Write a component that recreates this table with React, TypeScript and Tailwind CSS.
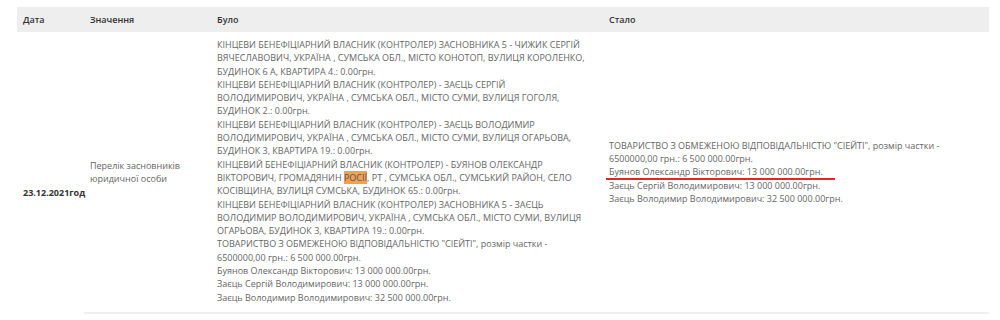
import React from "react";

const buloLines: React.ReactNode[] = [
  "КІНЦЕВИ БЕНЕФІЦІАРНИЙ ВЛАСНИК (КОНТРОЛЕР) ЗАСНОВНИКА 5 - ЧИЖИК СЕРГІЙ",
  "ВЯЧЕСЛАВОВИЧ, УКРАЇНА , СУМСЬКА ОБЛ., МІСТО КОНОТОП, ВУЛИЦЯ КОРОЛЕНКО,",
  "БУДИНОК 6 А, КВАРТИРА 4.: 0.00грн.",
  "КІНЦЕВИ БЕНЕФІЦІАРНИЙ ВЛАСНИК (КОНТРОЛЕР) - ЗАЄЦЬ СЕРГІЙ",
  "ВОЛОДИМИРОВИЧ, УКРАЇНА , СУМСЬКА ОБЛ., МІСТО СУМИ, ВУЛИЦЯ ГОГОЛЯ,",
  "БУДИНОК 2.: 0.00грн.",
  "КІНЦЕВИ БЕНЕФІЦІАРНИЙ ВЛАСНИК (КОНТРОЛЕР) - ЗАЄЦЬ ВОЛОДИМИР",
  "ВОЛОДИМИРОВИЧ, УКРАЇНА , СУМСЬКА ОБЛ., МІСТО СУМИ, ВУЛИЦЯ ОГАРЬОВА,",
  "БУДИНОК 3, КВАРТИРА 19.: 0.00грн.",
  "КІНЦЕВИЙ БЕНЕФІЦІАРНИЙ ВЛАСНИК (КОНТРОЛЕР) - БУЯНОВ ОЛЕКСАНДР",
  <>
    ВІКТОРОВИЧ, ГРОМАДЯНИН <span className="bg-[#f6a04d] text-[#555]">РОСІЇ</span>, РТ , СУМСЬКА ОБЛ., СУМСЬКИЙ РАЙОН, СЕЛО
  </>,
  "КОСІВЩИНА, ВУЛИЦЯ СУМСЬКА, БУДИНОК 65.: 0.00грн.",
  "КІНЦЕВИ БЕНЕФІЦІАРНИЙ ВЛАСНИК (КОНТРОЛЕР) ЗАСНОВНИКА 5 - ЗАЄЦЬ",
  "ВОЛОДИМИР ВОЛОДИМИРОВИЧ, УКРАЇНА , СУМСЬКА ОБЛ., МІСТО СУМИ, ВУЛИЦЯ",
  "ОГАРЬОВА, БУДИНОК 3, КВАРТИРА 19.: 0.00грн.",
  "ТОВАРИСТВО З ОБМЕЖЕНОЮ ВІДПОВІДАЛЬНІСТЮ \"СІЕЙТІ\", розмір частки -",
  "6500000,00 грн.: 6 500 000.00грн.",
  "Буянов Олександр Вікторович: 13 000 000.00грн.",
  "Заєць Сергій Володимирович: 13 000 000.00грн.",
  "Заєць Володимир Володимирович: 32 500 000.00грн.",
];

export default function App() {
  return (
    <div
      className="w-[1000px] h-[320px] bg-white overflow-hidden pt-[7px] pl-[17px] text-[9px] text-[#666]"
      style={{ fontFamily: '"Open Sans", "Noto Sans", sans-serif' }}
    >
      <div className="w-[972px]">
        <div className="flex h-[25px] items-center bg-[#eeeeee] font-semibold text-[#333]">
          <div className="w-[67px] px-[6px]">Дата</div>
          <div className="w-[127px] px-[6px]">Значення</div>
          <div className="w-[392px] px-[6px]">Було</div>
          <div className="flex-1 px-[6px]">Стало</div>
        </div>
        <div className="flex">
          <div className="w-[67px] px-[6px] pt-[154px] font-bold text-[#333] whitespace-nowrap leading-[13.3px]">
            23.12.2021год
          </div>
          <div className="flex flex-1 border-b-2 border-[#f0f0f0]">
            <div className="w-[127px] px-[6px] flex items-center leading-[13.3px]">
              <div>
                Перелік засновників
                <br />
                юридичної особи
              </div>
            </div>
            <div className="w-[392px] px-[6px] pt-[6px] pb-[8px] leading-[13.3px] whitespace-nowrap">
              {buloLines.map((l, i) => (
                <div key={i}>{l}</div>
              ))}
            </div>
            <div className="flex-1 px-[6px] flex items-center leading-[13.3px] whitespace-nowrap">
              <div>
                <div>ТОВАРИСТВО З ОБМЕЖЕНОЮ ВІДПОВІДАЛЬНІСТЮ "СІЕЙТІ", розмір частки -</div>
                <div>6500000,00 грн.: 6 500 000.00грн.</div>
                <div className="relative">
                  Буянов Олександр Вікторович: 13 000 000.00грн.
                  <span className="absolute left-[-3px] w-[229px] bottom-[-1px] h-[2px] bg-[#e8242a]" />
                </div>
                <div>Заєць Сергій Володимирович: 13 000 000.00грн.</div>
                <div>Заєць Володимир Володимирович: 32 500 000.00грн.</div>
              </div>
            </div>
          </div>
        </div>
      </div>
    </div>
  );
}
